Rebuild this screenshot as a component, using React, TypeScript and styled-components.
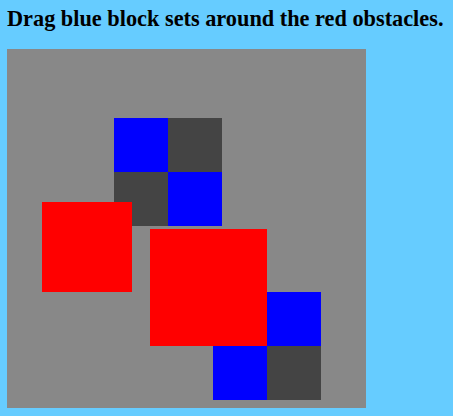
import React from 'react';
import styled, { createGlobalStyle } from 'styled-components';

const GlobalStyle = createGlobalStyle`
  html, body {
    margin: 0;
    background: #66ccff;
  }
  body {
    padding: 4px 7px;
    font-family: "Liberation Serif", "Times New Roman", serif;
  }
`;

const Title = styled.h2`
  margin: 0 0 15px;
  font-size: 22.3px;
  line-height: 30px;
  font-weight: bold;
  color: #000;
`;

const Board = styled.div`
  position: relative;
  width: 359px;
  height: 359px;
  background: #888888;
  overflow: hidden;
`;

const CELL = 54;

const BlockSet = styled.div<{ $x: number; $y: number }>`
  position: absolute;
  left: ${({ $x }) => $x}px;
  top: ${({ $y }) => $y}px;
  display: grid;
  grid-template-columns: repeat(2, ${CELL}px);
  grid-template-rows: repeat(2, ${CELL}px);
  cursor: move;
`;

const Cell = styled.div<{ $on: boolean }>`
  background: ${({ $on }) => ($on ? '#0000ff' : '#444444')};
`;

const Obstacle = styled.div<{ $x: number; $y: number; $size: number }>`
  position: absolute;
  left: ${({ $x }) => $x}px;
  top: ${({ $y }) => $y}px;
  width: ${({ $size }) => $size}px;
  height: ${({ $size }) => $size}px;
  background: #ff0000;
`;

type Piece = { x: number; y: number; cells: boolean[] };

// each set is a 2x2 grid, cells listed row by row
const pieces: Piece[] = [
  { x: 107, y: 69, cells: [true, false, false, true] },
  { x: 206, y: 243, cells: [false, true, true, false] },
];

const obstacles = [
  { x: 35, y: 153, size: 90 },
  { x: 143, y: 180, size: 117 },
];

export default function App() {
  return (
    <>
      <GlobalStyle />
      <Title>Drag blue block sets around the red obstacles.</Title>
      <Board>
        {pieces.map((p, i) => (
          <BlockSet key={i} $x={p.x} $y={p.y}>
            {p.cells.map((on, j) => (
              <Cell key={j} $on={on} />
            ))}
          </BlockSet>
        ))}
        {obstacles.map((o, i) => (
          <Obstacle key={i} $x={o.x} $y={o.y} $size={o.size} />
        ))}
      </Board>
    </>
  );
}
